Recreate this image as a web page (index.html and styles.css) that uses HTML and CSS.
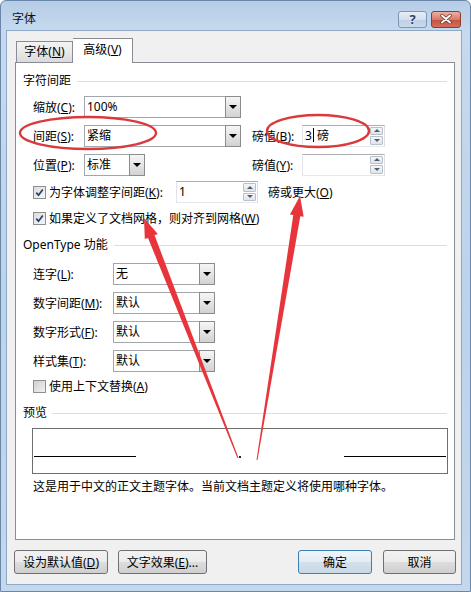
FILE: index.html
```html
<!DOCTYPE html>
<html lang="zh-CN">
<head>
    <meta charset="UTF-8">
    <title>字体</title>
    <link rel="stylesheet" href="styles.css">
</head>
<body>
<div class="window">
    <div class="titlebar">
        <span class="title">字体</span>
        <div class="caption">
            <span class="cap-btn help">?</span>
            <span class="cap-btn close">
                <svg width="12" height="10" viewBox="0 0 12 10">
                    <path d="M2 1.5 L10 8.5 M10 1.5 L2 8.5" stroke="#6b2a24" stroke-width="3.4" stroke-linecap="round"/>
                    <path d="M2 1.5 L10 8.5 M10 1.5 L2 8.5" stroke="#fff" stroke-width="2" stroke-linecap="round"/>
                </svg>
            </span>
        </div>
    </div>

    <div class="client">
        <div class="tabs">
            <span class="tab">字体(<u>N</u>)</span>
            <span class="tab active">高级(<u>V</u>)</span>
        </div>

        <div class="panel">
            <div class="group-title first">字符间距</div>

            <div class="rows">
                <div class="row">
                    <span class="lbl-a">缩放(<u>C</u>):</span>
                    <div class="combo wide"><span class="value">100%</span><span class="drop"></span></div>
                </div>
                <div class="row">
                    <span class="lbl-a">间距(<u>S</u>):</span>
                    <div class="combo wide"><span class="value">紧缩</span><span class="drop"></span></div>
                    <span class="lbl-b">磅值(<u>B</u>):</span>
                    <div class="spin"><span class="value">3<span class="caret"></span> 磅</span><span class="arrows"><i class="up"></i><i class="down"></i></span></div>
                </div>
                <div class="row">
                    <span class="lbl-a">位置(<u>P</u>):</span>
                    <div class="combo small"><span class="value">标准</span><span class="drop"></span></div>
                    <span class="lbl-b pushed">磅值(<u>Y</u>):</span>
                    <div class="spin"><span class="value"></span><span class="arrows"><i class="up"></i><i class="down"></i></span></div>
                </div>
            </div>

            <div class="check-row">
                <span class="box"><svg width="11" height="11" viewBox="0 0 11 11"><path d="M2.3 5.6 L4.5 8.2 L8.8 2.4" fill="none" stroke="#213f77" stroke-width="1.7"/></svg></span>
                <span class="check-label kern">为字体调整字间距(<u>K</u>):</span>
                <div class="spin kern-spin"><span class="value">1</span><span class="arrows"><i class="up"></i><i class="down"></i></span></div>
                <span class="after-text">磅或更大(<u>O</u>)</span>
            </div>
            <div class="check-row">
                <span class="box"><svg width="11" height="11" viewBox="0 0 11 11"><path d="M2.3 5.6 L4.5 8.2 L8.8 2.4" fill="none" stroke="#213f77" stroke-width="1.7"/></svg></span>
                <span class="check-label">如果定义了文档网格，则对齐到网格(<u>W</u>)</span>
            </div>

            <div class="group-title second">OpenType 功能</div>

            <div class="rows opentype">
                <div class="row">
                    <span class="lbl-c">连字(<u>L</u>):</span>
                    <div class="combo mid"><span class="value">无</span><span class="drop"></span></div>
                </div>
                <div class="row">
                    <span class="lbl-c">数字间距(<u>M</u>):</span>
                    <div class="combo mid"><span class="value">默认</span><span class="drop"></span></div>
                </div>
                <div class="row">
                    <span class="lbl-c">数字形式(<u>F</u>):</span>
                    <div class="combo mid"><span class="value">默认</span><span class="drop"></span></div>
                </div>
                <div class="row">
                    <span class="lbl-c">样式集(<u>T</u>):</span>
                    <div class="combo mid"><span class="value">默认</span><span class="drop"></span></div>
                </div>
            </div>

            <div class="check-row short">
                <span class="box empty"></span>
                <span class="check-label">使用上下文替换(<u>A</u>)</span>
            </div>

            <div class="group-title third">预览</div>

            <div class="preview">
                <span class="rule"></span>
                <span class="dot"></span>
                <span class="rule"></span>
            </div>
            <p class="note">这是用于中文的正文主题字体。当前文档主题定义将使用哪种字体。</p>
        </div>

        <div class="button-row">
            <button class="btn w94">设为默认值(<u>D</u>)</button>
            <button class="btn w89">文字效果(<u>E</u>)...</button>
            <button class="btn w74 default">确定</button>
            <button class="btn w73">取消</button>
        </div>
    </div>

    <!-- red annotations drawn over the dialog -->
    <svg class="marks" width="471" height="592" viewBox="0 0 471 592">
        <ellipse cx="88" cy="133" rx="68" ry="16" fill="none" stroke="#d93a3c" stroke-width="2.4"/>
        <ellipse cx="318" cy="131" rx="51" ry="16" fill="none" stroke="#d93a3c" stroke-width="2.4"/>
        <polygon fill="#e8353b" points="144,218 157.8,234.1 154.6,235.3 238.5,457.8 237.5,458.2 148,237.9 144.8,239.1"/>
        <polygon fill="#e8353b" points="300,196 303.7,216.8 300.3,216.3 257.5,460.1 256.5,459.9 293.3,215.1 289.9,214.6"/>
    </svg>
</div>
</body>
</html>
```

FILE: styles.css
```css
* {
    box-sizing: border-box;
}
body {
    margin: 0;
    font-family: "Noto Sans", "Noto Sans CJK SC", sans-serif;
    font-size: 12px;
    color: #000;
    background: #fff;
}
u {
    text-decoration: underline;
    text-underline-offset: 1px;
}
.window {
    position: relative;
    width: 471px;
    height: 592px;
    border: 1px solid #6a86a8;
    border-radius: 6px 6px 0 0;
    background: linear-gradient(#b6cde7, #c6d9ee 30px, #bcd3ec 300px, #c3d7ed);
    padding: 0 8px 6px 5px;
    display: flex;
    flex-direction: column;
}
.titlebar {
    height: 29px;
    display: flex;
    align-items: center;
    padding: 7px 1px 0 6px;
}
.title {
    flex: 1;
    line-height: 16px;
    color: #111;
}
.caption {
    display: flex;
    gap: 4px;
}
.cap-btn {
    height: 17px;
    border-radius: 3px;
    display: flex;
    align-items: center;
    justify-content: center;
}
.help {
    width: 29px;
    border: 1px solid #7f96b4;
    background: linear-gradient(#e6eef8, #d3e0ef 50%, #bccfe6 51%, #c9daee);
    color: #2c4466;
    font-weight: bold;
    font-size: 13px;
    line-height: 15px;
    text-shadow: 0 0 2px #fff;
}
.close {
    width: 30px;
    border: 1px solid #8e3a31;
    background: linear-gradient(#eab0a2, #d97a68 50%, #c7503f 51%, #d0705c);
}
.client {
    flex: 1;
    background: #f0f0f0;
    border: 1px solid #8ea8c6;
    padding: 7px 5px 0 8px;
    display: flex;
    flex-direction: column;
}
.tabs {
    display: flex;
    align-items: flex-end;
    height: 24px;
    padding-left: 1px;
}
.tab {
    width: 57px;
    height: 21px;
    border: 1px solid #898c95;
    border-bottom: none;
    background: linear-gradient(#f3f3f3, #e9e9e9 50%, #dadada);
    text-align: center;
    line-height: 20px;
}
.tab.active {
    width: 60px;
    height: 25px;
    background: #fff;
    border-left: none;
    margin-bottom: -1px;
    padding-top: 1px;
    position: relative;
    z-index: 1;
}
.panel {
    height: 478px;
    margin-right: 1px;
    background: #fff;
    border: 1px solid #898c95;
    padding: 0 7px;
}
.group-title {
    display: flex;
    align-items: center;
    gap: 6px;
    height: 16px;
    line-height: 16px;
}
.group-title::after {
    content: "";
    flex: 1;
    height: 1px;
    background: #d9dfe6;
}
.group-title.first {
    margin-top: 10px;
}
.group-title.second {
    margin-top: 6px;
}
.group-title.third {
    margin-top: 8px;
    gap: 5px;
}
.rows {
    margin: 3px 0 0 10px;
}
.rows.opentype {
    margin-top: 6px;
}
.row {
    display: flex;
    align-items: center;
    height: 29px;
}
.lbl-a {
    width: 51px;
}
.lbl-b {
    width: 50px;
    margin-left: 11px;
}
.lbl-b.pushed {
    margin-left: 107px;
}
.lbl-c {
    width: 80px;
}
.combo, .spin {
    display: flex;
    height: 22px;
    border: 1px solid #a3a6ab;
    background: #fff;
}
.combo.wide {
    width: 157px;
}
.combo.small {
    width: 61px;
}
.combo.mid {
    width: 102px;
}
.value {
    flex: 1;
    padding-left: 2px;
    line-height: 20px;
    white-space: nowrap;
}
.drop {
    width: 16px;
    margin: -1px -1px -1px 0;
    border: 1px solid #8c8c8c;
    background: linear-gradient(#f6f6f6, #e4e4e4 50%, #d2d2d2);
    display: flex;
    align-items: center;
    justify-content: center;
}
.drop::after {
    content: "";
    border-left: 4px solid transparent;
    border-right: 4px solid transparent;
    border-top: 4px solid #000;
}
.spin {
    width: 83px;
    border-color: #abadb3 #dbdfe6 #e3e9ef #e2e3ea;
}
.caret {
    display: inline-block;
    width: 1px;
    height: 14px;
    margin-left: 1px;
    background: #000;
    vertical-align: -2px;
}
.arrows {
    width: 13px;
    margin: 1px;
    display: flex;
    flex-direction: column;
    gap: 1px;
}
.arrows i {
    flex: 1;
    border: 1px solid #b7c0cb;
    border-radius: 1px;
    background: linear-gradient(#f4f6f8, #dfe4ea);
    display: flex;
    align-items: center;
    justify-content: center;
}
.arrows i::after {
    content: "";
    border-left: 3px solid transparent;
    border-right: 3px solid transparent;
}
.arrows .up::after {
    border-bottom: 3px solid #4e5e72;
}
.arrows .down::after {
    border-top: 3px solid #4e5e72;
}
.check-row {
    display: flex;
    align-items: center;
    height: 26px;
    padding-left: 10px;
}
.check-row.short {
    height: 22px;
}
.box {
    width: 13px;
    height: 13px;
    margin-right: 3px;
    border: 1px solid #8e8f8f;
    background: linear-gradient(135deg, #dcdcdc, #f7f7f7);
    display: flex;
    align-items: center;
    justify-content: center;
}
.box.empty {
    background: linear-gradient(135deg, #cfcfcf, #f2f2f2);
}
.check-label.kern {
    width: 127px;
}
.spin.kern-spin {
    width: 82px;
}
.after-text {
    margin-left: 10px;
}
.preview {
    margin: 7px 0 0 9px;
    width: 416px;
    height: 46px;
    border: 1px solid #6f6f6f;
    padding: 27px 1px 0;
    display: flex;
    justify-content: space-between;
    align-items: flex-start;
}
.rule {
    width: 102px;
    height: 1px;
    background: #000;
}
.dot {
    width: 2px;
    height: 2px;
    background: #222;
}
.note {
    margin: 5px 0 0 10px;
    line-height: 16px;
}
.button-row {
    display: flex;
    margin: 10px 0 0 -1px;
    gap: 10px;
}
.btn {
    height: 24px;
    padding: 0;
    border: 1px solid #707070;
    border-radius: 3px;
    background: linear-gradient(#f2f2f2, #ebebeb 50%, #dddddd 51%, #cfcfcf);
    font-family: inherit;
    font-size: 12px;
    color: #000;
}
.w94 {
    width: 94px;
}
.w89 {
    width: 89px;
}
.w74 {
    width: 74px;
    margin-left: auto;
}
.w73 {
    width: 73px;
    margin-left: 1px;
}
.btn.default {
    border-color: #3c7fb1;
    background: linear-gradient(#eef4f9, #e3ecf3 50%, #d4e1eb 51%, #c8d8e5);
}
.marks {
    position: absolute;
    left: -1px;
    top: -1px;
    pointer-events: none;
}
```
